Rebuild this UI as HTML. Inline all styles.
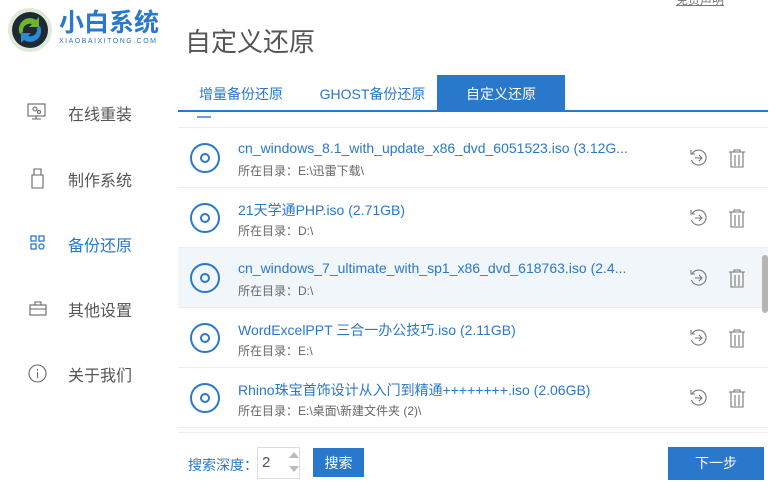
<!DOCTYPE html>
<html><head><meta charset="utf-8"><style>
*{margin:0;padding:0;box-sizing:border-box}
body{width:775px;height:486px;background:#fff;font-family:"Liberation Sans","Noto Sans CJK SC",sans-serif;position:relative;overflow:hidden}
.a{position:absolute}
.nav{position:absolute;left:68px;font-size:16px;color:#555}
.ico{position:absolute;left:27px}
.tab{position:absolute;top:75px;height:35px;line-height:38px;font-size:14px;color:#2a78cc;text-align:center}
.row{position:absolute;left:178px;width:590px;height:60px;border-bottom:1px solid #ececec}
.row .c{position:absolute;left:12px;top:15px;width:30px;height:30px;border:2px solid #2a78cc;border-radius:50%}
.row .c:after{content:"";position:absolute;left:8px;top:8px;width:10px;height:10px;border:2px solid #2a78cc;border-radius:50%;box-sizing:border-box}
.row .t{position:absolute;left:60px;top:12px;font-size:14px;color:#2a78cc;white-space:nowrap}
.row .s{position:absolute;left:60px;top:34px;font-size:12px;color:#666;white-space:nowrap}
.row svg{position:absolute;top:20px}
</style></head><body>
<svg class="a" style="left:6px;top:6px" width="48" height="48" viewBox="0 0 48 48">
<circle cx="24" cy="24" r="22" fill="#dfe9d8"/><circle cx="24" cy="24" r="18" fill="#1d2a33"/>
<path d="M14 28a11 11 0 0 1 16-14l3-3v10h-10l3-3a7 7 0 0 0-9 8z" fill="#6fb528"/>
<path d="M34 20a11 11 0 0 1-16 14l-3 3V27h10l-3 3a7 7 0 0 0 9-8z" fill="#2a8ad6"/></svg>
<div class="a" style="left:59px;top:8px;font-size:25px;line-height:30px;color:#2a78cc;font-weight:bold">小白系统</div>
<div class="a" style="left:59px;top:38px;font-size:7px;color:#2a78cc;letter-spacing:1.5px">XIAOBAIXITONG.COM</div>
<div class="a" style="left:185px;top:22px;font-size:26px;color:#555">自定义还原</div>
<div class="a" style="left:676px;top:-9px;font-size:12px;color:#777;text-decoration:underline">免责声明</div>
<svg class="ico" style="top:103px" width="20" height="18" viewBox="0 0 20 18" fill="none" stroke="#666" stroke-width="1.1"><rect x="1" y="1" width="17" height="12"/><circle cx="8" cy="6" r="2"/><circle cx="12" cy="9" r="1.5"/><path d="M9 13v3M5 16h9"/></svg>
<div class="nav" style="top:101px">在线重装</div>
<svg class="ico" style="top:168px;left:31px" width="14" height="22" viewBox="0 0 14 22" fill="none" stroke="#666" stroke-width="1.1"><path d="M3 1h7v6H3zM1 7h11v13H1z"/></svg>
<div class="nav" style="top:167px">制作系统</div>
<svg class="ico" style="top:235px;left:30px" width="16" height="16" viewBox="0 0 16 16" fill="none" stroke="#2a78cc" stroke-width="1.3"><rect x="1" y="1" width="5" height="5"/><rect x="1" y="9" width="5" height="5"/><rect x="9" y="1" width="5" height="5"/><circle cx="11.5" cy="11.5" r="2.5"/></svg>
<div class="nav" style="top:232px;color:#2a78cc">备份还原</div>
<svg class="ico" style="top:301px;left:29px" width="18" height="15" viewBox="0 0 18 15" fill="none" stroke="#666" stroke-width="1.1"><rect x="1" y="4" width="16" height="10"/><path d="M6 4V1h6v3M1 8h16"/></svg>
<div class="nav" style="top:297px">其他设置</div>
<svg class="ico" style="top:364px;left:28px" width="19" height="19" viewBox="0 0 19 19" fill="none" stroke="#666" stroke-width="1.1"><circle cx="9.5" cy="9.5" r="8.5"/><path d="M9.5 8v6M9.5 5v1.5"/></svg>
<div class="nav" style="top:362px">关于我们</div>
<div class="tab" style="left:186px;width:110px">增量备份还原</div>
<div class="tab" style="left:310px;width:125px">GHOST备份还原</div>
<div class="tab" style="left:437px;width:128px;background:#2a78cc;color:#fff">自定义还原</div>
<div class="a" style="left:178px;top:110px;width:590px;height:1.5px;background:#2a78cc"></div>
<div class="a" style="left:197px;top:116px;width:14px;height:2px;background:#2a78cc;opacity:.7"></div>
<div class="a" style="left:178px;top:127px;width:590px;height:1px;background:#ececec"></div>
<div class="row" style="top:128px"><div class="c"></div><div class="t">cn_windows_8.1_with_update_x86_dvd_6051523.iso (3.12G...</div><div class="s">所在目录：E:\迅雷下载\</div>ICONS</div>
<div class="row" style="top:188px"><div class="c"></div><div class="t">21天学通PHP.iso (2.71GB)</div><div class="s">所在目录：D:\</div>ICONS</div>
<div class="row" style="top:248px;background:#f1f6fa"><div class="c"></div><div class="t">cn_windows_7_ultimate_with_sp1_x86_dvd_618763.iso (2.4...</div><div class="s">所在目录：D:\</div>ICONS</div>
<div class="row" style="top:308px"><div class="c"></div><div class="t">WordExcelPPT 三合一办公技巧.iso (2.11GB)</div><div class="s">所在目录：E:\</div>ICONS</div>
<div class="row" style="top:368px"><div class="c"></div><div class="t">Rhino珠宝首饰设计从入门到精通++++++++.iso (2.06GB)</div><div class="s">所在目录：E:\桌面\新建文件夹 (2)\</div>ICONS</div>
<div class="a" style="left:762px;top:255px;width:6px;height:58px;background:#b5b5b5;border-radius:3px"></div>
<div class="a" style="left:178px;top:432px;width:590px;height:1px;background:#ececec"></div>
<div class="a" style="left:188px;top:455px;font-size:14px;color:#2a78cc">搜索深度：</div>
<div class="a" style="left:257px;top:447px;width:43px;height:32px;border:1px solid #ddd;background:#fff"></div>
<div class="a" style="left:262px;top:454px;font-size:15px;color:#555">2</div>
<div class="a" style="left:289px;top:452px;width:0;height:0;border:5px solid transparent;border-bottom:6px solid #bbb;border-top:0"></div>
<div class="a" style="left:289px;top:466px;width:0;height:0;border:5px solid transparent;border-top:6px solid #bbb;border-bottom:0"></div>
<div class="a" style="left:313px;top:448px;width:51px;height:29px;background:#2a78cc;color:#fff;font-size:14px;text-align:center;line-height:31px">搜索</div>
<div class="a" style="left:668px;top:447px;width:96px;height:33px;background:#2a78cc;color:#fff;font-size:14px;text-align:center;line-height:33px">下一步</div>
<script>
var ic='<svg style="left:510px" width="20" height="20" viewBox="0 0 20 20" fill="none" stroke="#777" stroke-width="1.1"><path d="M4 6a7.5 7.5 0 1 1-0.5 6"/><path d="M3 2v4h4"/><path d="M7 10h7M11 7l3 3-3 3"/></svg><svg style="left:549px" width="20" height="20" viewBox="0 0 20 20" fill="none" stroke="#777" stroke-width="1.1"><path d="M2 4h16M7 4V2h6v2M4 4v15h12V4M8 7v11M12 7v11"/></svg>';
document.querySelectorAll('.row').forEach(function(r){r.innerHTML=r.innerHTML.replace('ICONS',ic)});
</script>
</body></html>
